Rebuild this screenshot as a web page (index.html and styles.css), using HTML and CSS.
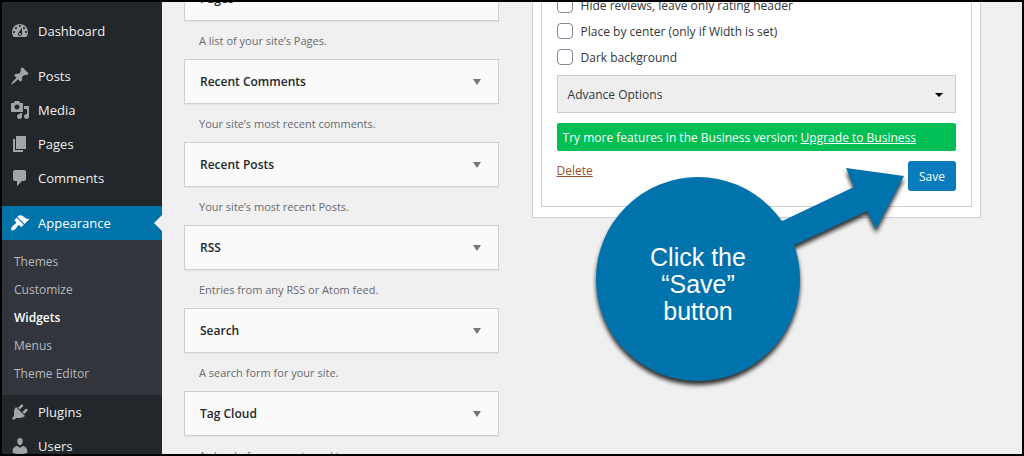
FILE: index.html
```html
<!DOCTYPE html>
<html lang="en">
<head>
  <meta charset="UTF-8">
  <title>Widgets</title>
  <link rel="stylesheet" href="styles.css">
</head>
<body>
  <nav class="admin-menu">
    <ul class="menu">
      <li><a href="#"><svg viewBox="0 0 20 20"><path fill-rule="evenodd" d="M3.76 16h12.48c1.1-1.37 1.76-3.11 1.76-5 0-4.42-3.58-8-8-8s-8 3.58-8 8c0 1.89.66 3.63 1.76 5zM10 4c.55 0 1 .45 1 1s-.45 1-1 1-1-.45-1-1 .45-1 1-1zM6 6c.55 0 1 .45 1 1s-.45 1-1 1-1-.45-1-1 .45-1 1-1zm8 0c.55 0 1 .45 1 1s-.45 1-1 1-1-.45-1-1 .45-1 1-1zm-5.37 5.55L12 7v6c0 1.1-.9 2-2 2s-2-.9-2-2c0-.57.24-1.08.63-1.45zM4 10c.55 0 1 .45 1 1s-.45 1-1 1-1-.45-1-1 .45-1 1-1zm12 0c.55 0 1 .45 1 1s-.45 1-1 1-1-.45-1-1 .45-1 1-1zm-5 3c0-.55-.45-1-1-1s-1 .45-1 1 .45 1 1 1 1-.45 1-1z"/></svg>Dashboard</a></li>
      <li class="group-start"><a href="#"><svg viewBox="0 0 20 20"><path d="M10.44 3.02l1.82-1.82 6.36 6.35-1.83 1.82c-1.05-.68-2.48-.57-3.41.36l-.75.75c-.92.93-1.04 2.35-.35 3.41l-1.83 1.82-2.41-2.41-2.8 2.79c-.42.42-3.38 2.71-3.8 2.29s1.86-3.39 2.28-3.81l2.79-2.79L4.1 9.36l1.83-1.82c1.05.69 2.48.57 3.4-.36l.75-.75c.93-.92 1.05-2.35.36-3.41z"/></svg>Posts</a></li>
      <li><a href="#"><svg viewBox="0 0 20 20"><path fill-rule="evenodd" d="M13 11V4c0-.55-.45-1-1-1h-1.67L9 1H5L3.67 3H2c-.55 0-1 .45-1 1v7c0 .55.45 1 1 1h10c.55 0 1-.45 1-1zM7 4.5c1.38 0 2.5 1.12 2.5 2.5S8.38 9.5 7 9.5 4.5 8.38 4.5 7 5.62 4.5 7 4.5zM14 6h5v10.5c0 1.38-1.12 2.5-2.5 2.5S14 17.88 14 16.5s1.12-2.5 2.5-2.5c.17 0 .34.02.5.05V9h-3V6zm-4 8.05V13h2v3.5c0 1.38-1.12 2.5-2.5 2.5S7 17.88 7 16.5 8.12 14 9.5 14c.17 0 .34.02.5.05z"/></svg>Media</a></li>
      <li><a href="#"><svg viewBox="0 0 20 20"><path d="M6 15V2h10v13H6zm-1 1h8v2H3V5h2v11z"/></svg>Pages</a></li>
      <li><a href="#"><svg viewBox="0 0 20 20"><path d="M5 2h9c1.1 0 2 .9 2 2v7c0 1.1-.9 2-2 2h-2l-5 5v-5H5c-1.1 0-2-.9-2-2V4c0-1.1.9-2 2-2z"/></svg>Comments</a></li>
      <li class="group-start current">
        <a href="#"><svg viewBox="0 0 20 20"><path d="M14.48 11.06L7.41 3.99l1.5-1.5c.5-.56 2.3-.47 3.51.32 1.21.8 1.43 1.28 2.91 2.1 1.18.64 2.45 1.26 4.45.85zm-.71.71L6.7 4.7 4.93 6.47c-.39.39-.39 1.02 0 1.41l1.06 1.06c.39.39.39 1.03 0 1.42-.6.6-1.43 1.11-2.21 1.69-.35.26-.7.53-1.01.84C1.43 14.23.4 16.08 1.4 17.07c.99 1 2.84-.03 4.18-1.36.31-.31.58-.66.85-1.02.57-.78 1.08-1.61 1.69-2.21.39-.39 1.02-.39 1.41 0l1.06 1.06c.39.39 1.02.39 1.41 0z"/></svg>Appearance</a>
        <ul class="submenu">
          <li><a href="#">Themes</a></li>
          <li><a href="#">Customize</a></li>
          <li><a href="#" class="active">Widgets</a></li>
          <li><a href="#">Menus</a></li>
          <li><a href="#">Theme Editor</a></li>
        </ul>
      </li>
      <li><a href="#"><svg viewBox="0 0 20 20"><path d="M13.11 4.36L9.87 7.6 8 5.73l3.24-3.24c.35-.34 1.05-.2 1.56.32.52.51.66 1.21.31 1.55zm-8 1.77l.91-1.12 9.01 9.01-1.19.84c-.71.71-2.63 1.16-3.82 1.16H6.14L4.9 17.26c-.59.59-1.54.59-2.12 0-.59-.58-.59-1.53 0-2.12l1.24-1.24v-3.88c0-1.13.4-3.19 1.09-3.89zm7.26 3.97l3.24-3.24c.34-.35 1.04-.21 1.55.31.52.51.66 1.21.31 1.55l-3.24 3.25z"/></svg>Plugins</a></li>
      <li><a href="#"><svg viewBox="0 0 20 20"><path d="M10 9.25c-2.27 0-2.73-3.44-2.73-3.44C7 4.02 7.82 2 9.97 2c2.16 0 2.98 2.02 2.71 3.81 0 0-.41 3.44-2.68 3.44zm0 2.57L12.72 10c2.39 0 4.52 2.33 4.52 4.53v2.49s-3.65 1.13-7.24 1.13c-3.65 0-7.24-1.13-7.24-1.13v-2.49c0-2.25 1.94-4.48 4.47-4.48z"/></svg>Users</a></li>
    </ul>
  </nav>

  <main class="content">
    <section class="available">
      <div class="widget">
        <button type="button">Pages<span class="arrow"></span></button>
        <p>A list of your site’s Pages.</p>
      </div>
      <div class="widget">
        <button type="button">Recent Comments<span class="arrow"></span></button>
        <p>Your site’s most recent comments.</p>
      </div>
      <div class="widget">
        <button type="button">Recent Posts<span class="arrow"></span></button>
        <p>Your site’s most recent Posts.</p>
      </div>
      <div class="widget">
        <button type="button">RSS<span class="arrow"></span></button>
        <p>Entries from any RSS or Atom feed.</p>
      </div>
      <div class="widget">
        <button type="button">Search<span class="arrow"></span></button>
        <p>A search form for your site.</p>
      </div>
      <div class="widget">
        <button type="button">Tag Cloud<span class="arrow"></span></button>
        <p>A cloud of your most used tags.</p>
      </div>
    </section>

    <section class="sidebar-area">
      <form class="widget-form">
        <div class="option">
          <input type="checkbox" id="hide-reviews">
          <label for="hide-reviews">Hide reviews, leave only rating header</label>
        </div>
        <div class="option">
          <input type="checkbox" id="centered">
          <label for="centered">Place by center (only if Width is set)</label>
        </div>
        <div class="option">
          <input type="checkbox" id="dark">
          <label for="dark">Dark background</label>
        </div>

        <button type="button" class="advance">Advance Options<span class="caret"></span></button>

        <p class="promo">Try more features in the Business version: <a href="#">Upgrade to Business</a></p>

        <div class="actions">
          <a href="#" class="delete">Delete</a>
          <button type="button" class="save">Save</button>

          <!-- callout pointing at the save button -->
          <div class="callout">
            <svg viewBox="0 0 330 240">
              <circle cx="112" cy="118" r="102"/>
              <path d="M190 63L268 26L260 7L318 15L290 68L281 50L200 88z"/>
            </svg>
            <p>Click the<br>“Save”<br>button</p>
          </div>
        </div>
      </form>
    </section>
  </main>
</body>
</html>
```

FILE: styles.css
```css
* {
  box-sizing: border-box;
}
body {
  margin: 0;
  height: 100vh;
  display: flex;
  overflow: hidden;
  border: 2px solid #000;
  background: #f0f0f0;
  color: #32373c;
  font-family: "Open Sans", "Noto Sans", sans-serif;
  font-size: 12px;
  line-height: 20px;
}
ul {
  list-style: none;
  margin: 0;
  padding: 0;
}
p {
  margin: 0;
}
button {
  font: inherit;
  cursor: pointer;
}

/* left menu */
.admin-menu {
  flex: 0 0 160px;
  overflow: hidden;
  background: #22272b;
}
.menu {
  padding-top: 12px;
}
.menu a {
  display: flex;
  align-items: center;
  gap: 8px;
  height: 34px;
  padding: 0 8px;
  color: #eee;
  font-size: 13px;
  text-decoration: none;
}
.menu svg {
  width: 20px;
  height: 20px;
  fill: #a0a5aa;
}
.group-start {
  margin-top: 11px;
}
.current > a {
  position: relative;
  background: #0073aa;
  color: #fff;
}
.current > a svg {
  fill: #fff;
}
.current > a::after {
  content: "";
  position: absolute;
  right: 0;
  border: 8px solid transparent;
  border-left: 0;
  border-right-color: #f0f0f0;
}
.submenu {
  padding: 8px 0 7px;
  background: #32353c;
}
.submenu a {
  height: 28px;
  padding: 0 12px;
  color: #b4b9be;
  font-size: 12px;
}
.submenu a.active {
  color: #fff;
  font-weight: 600;
}

/* page content, scrolled part way down */
.content {
  flex: 1;
  min-width: 0;
  display: grid;
  grid-template-columns: minmax(0, 7fr) minmax(0, 10fr);
  align-items: start;
  gap: 33px;
  padding: 0 41px 0 22px;
  overflow: hidden;
}
.available {
  margin-top: -26px;
}
.widget button {
  display: flex;
  justify-content: space-between;
  align-items: center;
  width: 100%;
  height: 45px;
  padding: 1px 17px 0 15px;
  background: #fafafa;
  border: 1px solid #ccd0d4;
  box-shadow: 0 1px 1px rgba(0,0,0,0.04);
  color: #23282d;
  font-weight: 600;
}
.widget p {
  padding: 10px 15px 8px;
  color: #666b70;
  font-size: 11px;
}
.arrow {
  border: 4px solid transparent;
  border-top: 6px solid #72777c;
  border-bottom: 0;
}

/* opened widget */
.sidebar-area {
  margin-top: -24px;
  padding: 0 8px 10px;
  background: #fff;
  border: 1px solid #ccd0d4;
}
.widget-form {
  padding: 12px 15px 15px;
  border: 1px solid #ccd0d4;
}
.option {
  display: flex;
  align-items: center;
  gap: 8px;
  height: 26px;
}
.option label {
  padding-top: 2px;
}
.option input {
  appearance: none;
  width: 16px;
  height: 16px;
  margin: 0;
  background: #fff;
  border: 1px solid #7e8993;
  border-radius: 4px;
}
.advance {
  display: flex;
  justify-content: space-between;
  align-items: center;
  width: 100%;
  height: 38px;
  margin-top: 5px;
  padding: 2px 12px 0 10px;
  background: #eee;
  border: 1px solid #ccc;
  color: #32373c;
}
.caret {
  border: 4px solid transparent;
  border-top-color: #000;
  border-bottom: 0;
}
.promo {
  margin: 10px 0;
  padding: 5px 6px 3px;
  background: #00bf54;
  border-radius: 2px;
  color: #fff;
}
.promo a {
  color: #fff;
}
.actions {
  position: relative;
  display: flex;
  justify-content: space-between;
  align-items: flex-start;
}
.delete {
  color: #a0502d;
}
.save {
  height: 30px;
  padding: 2px 11px 0;
  background: #0a7bbd;
  border: 0;
  border-radius: 3px;
  color: #fff;
}

.callout {
  position: absolute;
  top: 0;
  right: 40px;
  width: 330px;
}
.callout svg {
  display: block;
  fill: #0072ac;
  filter: drop-shadow(0 4px 2px rgba(0,0,0,0.8));
}
.callout p {
  position: absolute;
  top: 83px;
  left: 10px;
  width: 204px;
  color: #fff;
  font-family: "Liberation Sans", Arial, sans-serif;
  font-size: 25px;
  line-height: 27px;
  text-align: center;
}
```
